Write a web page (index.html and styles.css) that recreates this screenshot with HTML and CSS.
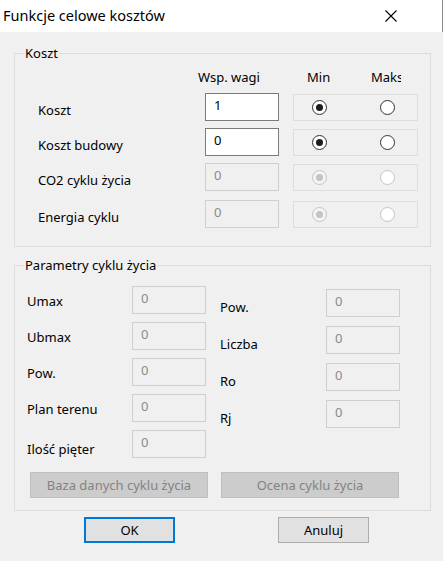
FILE: index.html
```html
<!DOCTYPE html>
<html lang="pl">
<head>
<meta charset="utf-8">
<title>Funkcje celowe kosztów</title>
<link rel="stylesheet" href="styles.css">
</head>
<body>
<div class="window">
  <div class="titlebar">
    <span class="title">Funkcje celowe kosztów</span>
    <svg class="close" width="12" height="12" viewBox="0 0 12 12"><path d="M0.5 0.5 L11.5 11.5 M11.5 0.5 L0.5 11.5" stroke="#000" stroke-width="1.1" fill="none"/></svg>
  </div>
  <div class="content">
    <fieldset class="group g1">
      <legend>Koszt</legend>
      <div class="inner1">
        <div class="head">
          <span class="h-wsp">Wsp. wagi</span>
          <span class="h-min">Min</span>
          <span class="h-maks">Maks</span>
        </div>
        <div class="row">
          <span class="lbl">Koszt</span>
          <div class="inp">1</div>
          <div class="rbox"><span class="radio on"></span><span class="radio"></span></div>
        </div>
        <div class="row">
          <span class="lbl">Koszt budowy</span>
          <div class="inp">0</div>
          <div class="rbox"><span class="radio on"></span><span class="radio"></span></div>
        </div>
        <div class="row">
          <span class="lbl">CO2 cyklu życia</span>
          <div class="inp dis">0</div>
          <div class="rbox"><span class="radio on dis"></span><span class="radio dis"></span></div>
        </div>
        <div class="row last">
          <span class="lbl">Energia cyklu</span>
          <div class="inp dis">0</div>
          <div class="rbox"><span class="radio on dis"></span><span class="radio dis"></span></div>
        </div>
      </div>
    </fieldset>

    <fieldset class="group g2">
      <legend>Parametry cyklu życia</legend>
      <div class="inner2">
        <div class="cols">
          <div class="col left">
            <div class="prow"><span class="plbl">Umax</span><div class="inp dis">0</div></div>
            <div class="prow"><span class="plbl">Ubmax</span><div class="inp dis">0</div></div>
            <div class="prow"><span class="plbl">Pow.</span><div class="inp dis">0</div></div>
            <div class="prow"><span class="plbl">Plan terenu</span><div class="inp dis">0</div></div>
            <div class="prow"><span class="plbl low">Ilość pięter</span><div class="inp dis">0</div></div>
          </div>
          <div class="col right">
            <div class="prow"><span class="plbl">Pow.</span><div class="inp dis">0</div></div>
            <div class="prow"><span class="plbl">Liczba</span><div class="inp dis">0</div></div>
            <div class="prow"><span class="plbl">Ro</span><div class="inp dis">0</div></div>
            <div class="prow"><span class="plbl">Rj</span><div class="inp dis">0</div></div>
          </div>
        </div>
        <div class="gbtns">
          <div class="gbtn">Baza danych cyklu życia</div>
          <div class="gbtn">Ocena cyklu życia</div>
        </div>
      </div>
    </fieldset>

    <div class="actions">
      <div class="btn ok">OK</div>
      <div class="btn">Anuluj</div>
    </div>
  </div>
</div>
</body>
</html>
```

FILE: styles.css
```css
* { box-sizing: border-box; }
html, body { margin: 0; padding: 0; }
body {
  width: 443px;
  height: 561px;
  background: #f0f0f0;
  font-family: "Noto Sans", "Open Sans", sans-serif;
  font-size: 13px;
  color: #000;
  overflow: hidden;
}
.window { width: 443px; height: 561px; display: flex; flex-direction: column; }
.titlebar {
  height: 32px;
  background: #fff;
  display: flex;
  align-items: center;
  justify-content: space-between;
  padding-left: 3px;
  padding-right: 45px;
  border-right: 1px solid #8a8a8a;
  flex: none;
}
.title { font-size: 14.5px; line-height: 20px; margin-top: -2px; }
.close { display: block; }

.content { padding: 0 12px 0 14px; }

.group {
  margin: 0;
  min-width: 0;
  border: 1px solid #dcdcdc;
  padding: 0;
}
.group legend {
  padding: 0 1px;
  margin-left: 9px;
  line-height: 15px;
  font-size: 13px;
}
.g1 { margin-top: 14px; }
.inner1 { padding: 8px 0 18px 23px; }

.head {
  display: flex;
  height: 16px;
  line-height: 16px;
}
.h-wsp { margin-left: 160px; width: 109px; flex: none; }
.h-min { width: 64px; flex: none; }
.h-maks { width: 30px; flex: none; overflow: hidden; white-space: nowrap; }

.row {
  display: flex;
  align-items: center;
  height: 28px;
  margin-top: 7px;
}
.head + .row { margin-top: 8px; }
.row.last { margin-top: 9px; }
.lbl { width: 167px; flex: none; padding-top: 5px; line-height: 16px; }

.inp {
  flex: none;
  width: 74px;
  height: 28px;
  border: 1px solid #7a7a7a;
  background: #fff;
  padding: 3px 0 0 8px;
  line-height: 16px;
  font-size: 13px;
}
.inp.dis {
  border-color: #cfcfcf;
  background: #f0f0f0;
  color: #8a8a8a;
}

.rbox {
  flex: none;
  margin-left: 14px;
  width: 125px;
  height: 27px;
  margin-top: 1px;
  border: 1px solid #dedede;
  display: flex;
  align-items: center;
  padding-left: 18px;
}
.radio {
  flex: none;
  width: 15px;
  height: 15px;
  border-radius: 50%;
  border: 1px solid #333;
  background: #fff;
  display: flex;
  align-items: center;
  justify-content: center;
  margin-right: 53px;
}
.radio.on::after {
  content: "";
  width: 7px;
  height: 7px;
  border-radius: 50%;
  background: #1c1c1c;
}
.radio.dis { border-color: #c4c4c4; }
.radio.on.dis { background: #f4f4f4; }
.radio.on.dis::after { background: #c4c4c4; }

.g2 { margin-top: 11px; }
.inner2 { padding: 13px 0 12px 12px; }
.cols { display: flex; }
.col { display: flex; flex-direction: column; }
.col.left { gap: 8px; }
.col.right { gap: 9px; padding-top: 3px; margin-left: 14px; }
.prow { display: flex; align-items: center; height: 28px; }
.plbl { width: 105px; flex: none; line-height: 16px; padding-top: 2px; }
.right .plbl { width: 106px; padding-top: 7px; }
.plbl.low { padding-top: 10px; }

.gbtns { display: flex; gap: 13px; margin-top: 14px; padding-left: 3px; }
.gbtn {
  flex: none;
  width: 178px;
  height: 26px;
  background: #cccccc;
  border: 1px solid #bfbfbf;
  color: #838383;
  display: flex;
  align-items: center;
  justify-content: center;
  line-height: 16px;
}

.actions { display: flex; margin-top: 6px; padding-left: 70px; gap: 103px; }
.btn {
  flex: none;
  width: 91px;
  height: 26px;
  background: #e1e1e1;
  border: 1px solid #adadad;
  display: flex;
  align-items: center;
  justify-content: center;
  line-height: 16px;
}
.btn.ok { border: 2px solid #0078d7; }
```
